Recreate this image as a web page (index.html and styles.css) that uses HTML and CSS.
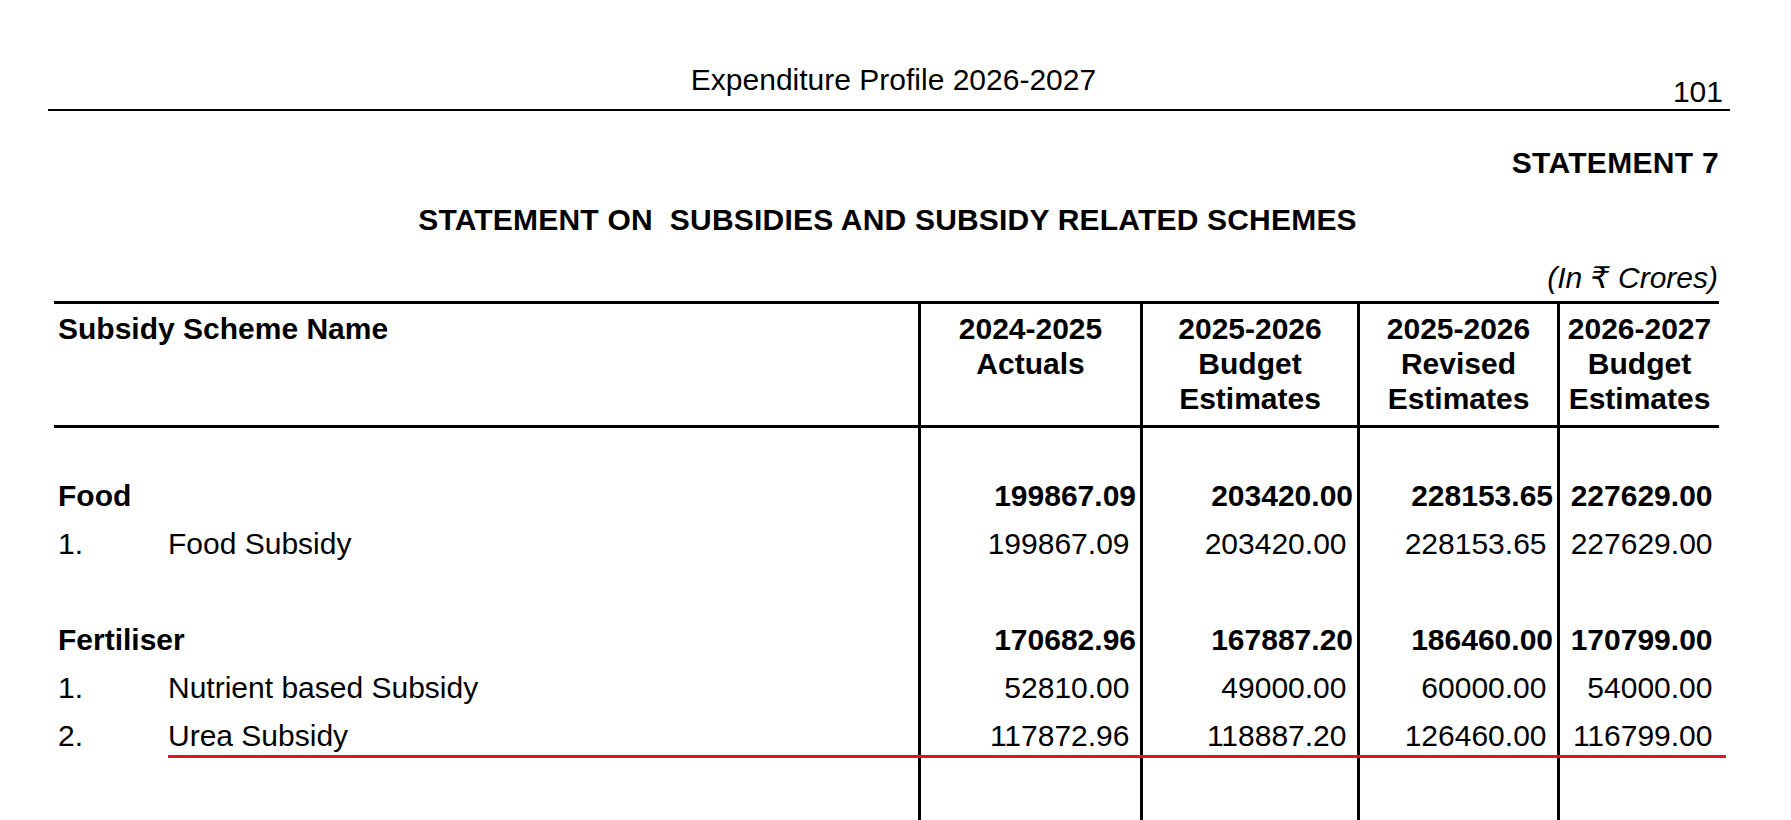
FILE: index.html
```html
<!DOCTYPE html>
<html lang="en">
<head>
<meta charset="utf-8">
<title>Expenditure Profile 2026-2027 - Statement 7</title>
<link rel="stylesheet" href="styles.css">
</head>
<body>
<div class="page">
  <header class="masthead">
    <div class="masthead-side"></div>
    <div class="masthead-title">Expenditure Profile 2026-2027</div>
    <div class="masthead-page">101</div>
  </header>

  <div class="content">
    <div class="statement-no">STATEMENT 7</div>
    <h1 class="statement-title">STATEMENT ON&nbsp; SUBSIDIES AND SUBSIDY RELATED SCHEMES</h1>
    <div class="unit">(In ₹ Crores)</div>

    <div class="table-wrap">
      <table class="subsidy">
        <colgroup>
          <col class="c-name">
          <col class="c-y1">
          <col class="c-y2">
          <col class="c-y3">
          <col class="c-y4">
        </colgroup>
        <thead>
          <tr>
            <th class="h-name">Subsidy Scheme Name</th>
            <th class="h-num">2024-2025<br>Actuals</th>
            <th class="h-num">2025-2026<br>Budget<br>Estimates</th>
            <th class="h-num">2025-2026<br>Revised<br>Estimates</th>
            <th class="h-num last">2026-2027<br>Budget<br>Estimates</th>
          </tr>
        </thead>
        <tbody>
          <tr class="spacer-first">
            <td></td><td></td><td></td><td></td><td class="last"></td>
          </tr>
          <tr class="group">
            <td class="name">Food</td>
            <td class="num">199867.09</td>
            <td class="num">203420.00</td>
            <td class="num">228153.65</td>
            <td class="num last">227629.00</td>
          </tr>
          <tr class="item">
            <td class="name"><span class="idx">1.</span>Food Subsidy</td>
            <td class="num">199867.09</td>
            <td class="num">203420.00</td>
            <td class="num">228153.65</td>
            <td class="num last">227629.00</td>
          </tr>
          <tr class="spacer">
            <td></td><td></td><td></td><td></td><td class="last"></td>
          </tr>
          <tr class="group">
            <td class="name">Fertiliser</td>
            <td class="num">170682.96</td>
            <td class="num">167887.20</td>
            <td class="num">186460.00</td>
            <td class="num last">170799.00</td>
          </tr>
          <tr class="item">
            <td class="name"><span class="idx">1.</span>Nutrient based Subsidy</td>
            <td class="num">52810.00</td>
            <td class="num">49000.00</td>
            <td class="num">60000.00</td>
            <td class="num last">54000.00</td>
          </tr>
          <tr class="item">
            <td class="name"><span class="idx">2.</span>Urea Subsidy</td>
            <td class="num">117872.96</td>
            <td class="num">118887.20</td>
            <td class="num">126460.00</td>
            <td class="num last">116799.00</td>
          </tr>
          <tr class="filler">
            <td></td><td></td><td></td><td></td><td class="last"></td>
          </tr>
        </tbody>
      </table>
      <div class="mark-line"></div>
    </div>
  </div>
</div>
</body>
</html>
```

FILE: styles.css
```css
html, body {
  margin: 0;
  padding: 0;
  background: #ffffff;
  overflow: hidden;
}

body {
  font-family: "Liberation Sans", Arial, "DejaVu Sans", "Noto Sans", sans-serif;
  font-size: 30px;
  color: #000000;
}

.page {
  width: 1791px;
  height: 820px;
  overflow: hidden;
}

/* ---------- running header ---------- */
.masthead {
  display: grid;
  grid-template-columns: 1fr auto 1fr;
  align-items: end;
  margin-left: 48px;
  width: 1682px;
  height: 109px;
  border-bottom: 2px solid #000;
  line-height: 34px;
}

.masthead-title {
  padding-bottom: 12px;
  padding-left: 9px;
  white-space: nowrap;
}

.masthead-page {
  text-align: right;
  padding-right: 7px;
}

/* ---------- statement heading ---------- */
.content {
  margin-left: 54px;
  width: 1665px;
}

.statement-no {
  margin-top: 35px;
  text-align: right;
  font-weight: bold;
  line-height: 34px;
  letter-spacing: 0.3px;
}

.statement-title {
  margin: 23px 0 0 0;
  font-size: 30px;
  font-weight: bold;
  line-height: 34px;
  text-align: center;
  white-space: nowrap;
  letter-spacing: 0.2px;
  padding-left: 2px;
}

.unit {
  margin-top: 24px;
  text-align: right;
  font-style: italic;
  line-height: 34px;
  padding-right: 1px;
}

/* ---------- table ---------- */
.table-wrap {
  position: relative;
  margin-top: 6px;
}

.subsidy {
  width: 1665px;
  table-layout: fixed;
  border-collapse: separate;
  border-spacing: 0;
  border-top: 3px solid #000;
}

.c-name { width: 867px; }
.c-y1 { width: 222px; }
.c-y2 { width: 217px; }
.c-y3 { width: 200px; }
.c-y4 { width: 159px; }

.subsidy th,
.subsidy td {
  padding: 0;
  border-right: 3px solid #000;
  white-space: nowrap;
}

.subsidy th.last,
.subsidy td.last {
  border-right: none;
}

.subsidy th {
  vertical-align: top;
  font-weight: bold;
  line-height: 35px;
  padding-top: 7px;
  padding-bottom: 9px;
  height: 105px;
  border-bottom: 3px solid #000;
}

.subsidy th.h-name {
  text-align: left;
  padding-left: 4px;
}

.subsidy th.h-num {
  text-align: center;
}

.subsidy td {
  height: 48px;
  line-height: 48px;
  vertical-align: top;
}

.subsidy tr.spacer-first td {
  height: 44px;
}

.subsidy tr.filler td {
  height: 120px;
}

.subsidy td.name {
  padding-left: 4px;
}

.idx {
  display: inline-block;
  width: 110px;
}

.subsidy td.num {
  text-align: right;
  padding-right: 10.5px;
}

.subsidy tr.group td {
  font-weight: bold;
}

.subsidy tr.group td.num {
  padding-right: 4px;
}

.subsidy td.num.last,
.subsidy tr.group td.num.last {
  padding-right: 6.5px;
}

/* red annotation underline over the table */
.mark-line {
  position: absolute;
  left: 114px;
  top: 454px;
  width: 1558px;
  height: 2.5px;
  background: #e5121c;
}
```
